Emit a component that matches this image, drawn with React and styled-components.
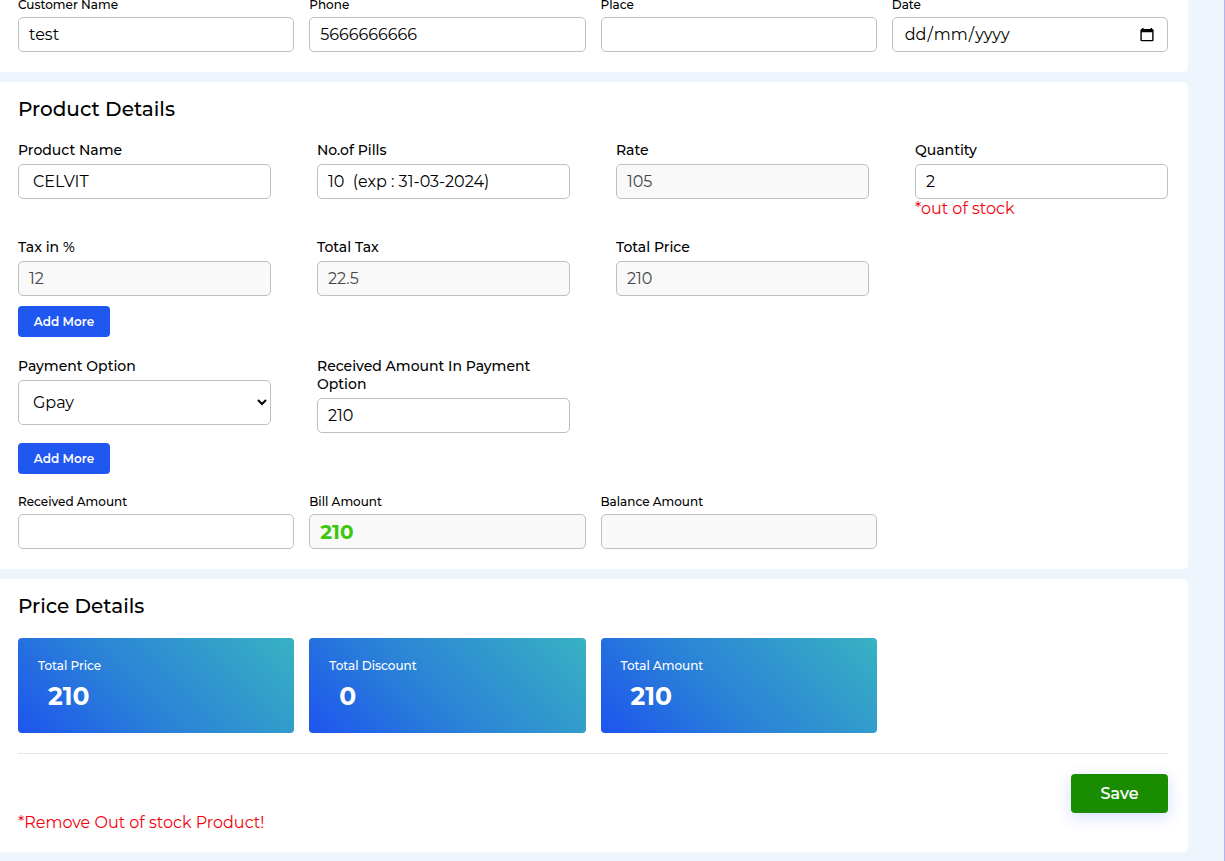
import React from "react";
import styled, { createGlobalStyle } from "styled-components";

const Global = createGlobalStyle`
  *, *::before, *::after { box-sizing: border-box; }
  html, body { margin: 0; padding: 0; }
  body {
    background: #eff5fd;
    color: #000;
    font-family: Montserrat, Inter, "Liberation Sans", sans-serif;
    height: 861px;
    overflow: hidden;
  }
  input, select, button { font-family: inherit; }
`;

const Page = styled.main`
  height: 861px;
  padding-right: 36px;
  display: flex;
  flex-direction: column;
  gap: 10px;
  border-right: 1px solid #b3b0f6;
  overflow: hidden;
`;

const Panel = styled.section`
  flex: none;
  height: ${(p) => p.$height}px;
  padding: ${(p) => p.$top || 0}px 20px 20px 18px;
  background: #fff;
  border-radius: ${(p) => (p.$first ? "0 0 5px 0" : "0 5px 5px 0")};
  display: flex;
  flex-direction: column;
  justify-content: ${(p) => (p.$first ? "flex-end" : "flex-start")};
`;

const Title = styled.h2`
  margin: 0;
  font-size: 20px;
  line-height: 24px;
  font-weight: 500;
`;

const Columns = styled.div`
  display: grid;
  grid-template-columns: repeat(4, minmax(0, 1fr));
  column-gap: ${(p) => p.$gap}px;
  row-gap: 20px;
  align-items: start;
  margin-top: ${(p) => p.$mt || 0}px;
`;

const FieldBox = styled.label`
  display: flex;
  flex-direction: column;
`;

const Label = styled.span`
  font-size: ${(p) => (p.$small ? 12 : 14)}px;
  line-height: ${(p) => (p.$small ? 15 : 18)}px;
  font-weight: 500;
  margin-bottom: 5px;
`;

const Input = styled.input`
  width: 100%;
  height: 35px;
  padding: 0 10px 0 ${(p) => p.$indent || 10}px;
  border: 1px solid #bfbfbf;
  border-radius: 5px;
  background: #fff;
  color: #000;
  font-size: 16px;
  outline: none;
  &:disabled {
    background: #f9f9f9;
    color: #484848;
  }
`;

const BillInput = styled(Input)`
  font-size: 20px;
  font-weight: 700;
  &:disabled { color: #3bc80c; }
`;

const DateBox = styled.div`
  height: 35px;
  padding: 0 13px 0 11px;
  border: 1px solid #bfbfbf;
  border-radius: 5px;
  display: flex;
  align-items: center;
  justify-content: space-between;
  font-size: 16px;
`;

const DatePart = styled.span`
  padding: 0 1px;
`;

const Select = styled.select`
  width: 100%;
  height: 45px;
  padding: 0 0 0 10px;
  border: 1px solid #bfbfbf;
  border-radius: 5px;
  background: #fff;
  color: #000;
  font-size: 16px;
`;

const ErrorText = styled.span`
  font-size: 16px;
  line-height: 19px;
  color: #f2000c;
`;

const AddButton = styled.button`
  flex: none;
  align-self: flex-start;
  width: 92px;
  height: 31px;
  margin-top: 10px;
  padding: 0;
  border: 0;
  border-radius: 4px;
  background: #1f57f0;
  color: #fff;
  font-size: 12px;
  font-weight: 600;
`;

const PriceCard = styled.div`
  height: 95px;
  padding: 20px;
  border-radius: 4px;
  background: linear-gradient(45deg, #1d54ef, #2a80d8 40%, #38b2c2);
  color: #fff;
`;

const CardLabel = styled.div`
  font-size: 12px;
  line-height: 15px;
  font-weight: 500;
`;

const CardValue = styled.div`
  margin-top: 8px;
  padding-left: 10px;
  font-size: 25px;
  line-height: 31px;
  font-weight: 700;
`;

const Rule = styled.hr`
  width: 100%;
  height: 1px;
  margin: 20px 0 0;
  border: 0;
  background: #e8e8e8;
`;

const Footer = styled.footer`
  display: flex;
  justify-content: space-between;
  align-items: flex-start;
  padding-top: 20px;
`;

const Warning = styled(ErrorText)`
  margin-top: 39px;
`;

const SaveButton = styled.button`
  width: 97px;
  height: 39px;
  padding: 0;
  border: 0;
  border-radius: 4px;
  background: #1a8c02;
  color: #fff;
  font-size: 16px;
  font-weight: 500;
  -webkit-text-stroke: 0.2px #fff;
  box-shadow: 0 4px 16px rgba(31, 87, 240, 0.2);
`;

function CalendarIcon() {
  return (
    <svg width="14" height="16" viewBox="0 0 14 16" aria-hidden="true">
      <path
        fill="#000"
        fillRule="evenodd"
        d="M2 1h1.5v1h7V1H12v1h.5A1.3 1.3 0 0 1 13.600 3.300V13a1.300 1.300 0 0 1-1.300 1.300H1.700A1.300 1.300 0 0 1 .4 13V3.300A1.300 1.300 0 0 1 1.500 2H2ZM1.800 5.200V12.900H12.200V5.200Z"
      />
    </svg>
  );
}

function Field({ label, small, children }) {
  return (
    <FieldBox>
      <Label $small={small}>{label}</Label>
      {children}
    </FieldBox>
  );
}

const cards = [
  { label: "Total Price", value: "210" },
  { label: "Total Discount", value: "0" },
  { label: "Total Amount", value: "210" },
];

export default function App() {
  return (
    <>
      <Global />
      <Page>
        <Panel $height={72} $first>
          <Columns $gap={15}>
            <Field small label="Customer Name"><Input defaultValue="test" /></Field>
            <Field small label="Phone"><Input defaultValue="5666666666" /></Field>
            <Field small label="Place"><Input /></Field>
            <Field small label="Date">
              <DateBox>
                <span>
                  <DatePart>dd</DatePart>/<DatePart>mm</DatePart>/<DatePart>yyyy</DatePart>
                </span>
                <CalendarIcon />
              </DateBox>
            </Field>
          </Columns>
        </Panel>

        <Panel $height={487} $top={15}>
          <Title>Product Details</Title>
          <Columns $gap={46} $mt={20}>
            <Field label="Product Name"><Input $indent={14} defaultValue="CELVIT" /></Field>
            <Field label="No.of Pills"><Input defaultValue={"10\u00a0 (exp : 31-03-2024)"} /></Field>
            <Field label="Rate"><Input disabled defaultValue="105" /></Field>
            <Field label="Quantity">
              <Input defaultValue="2" />
              <ErrorText>*out of stock</ErrorText>
            </Field>
            <Field label="Tax in %"><Input disabled defaultValue="12" /></Field>
            <Field label="Total Tax"><Input disabled defaultValue="22.5" /></Field>
            <Field label="Total Price"><Input disabled defaultValue="210" /></Field>
          </Columns>
          <AddButton>Add More</AddButton>
          <Columns $gap={46} $mt={20}>
            <Field label="Payment Option">
              <Select defaultValue="Gpay"><option>Gpay</option></Select>
            </Field>
            <Field label="Received Amount In Payment Option"><Input defaultValue="210" /></Field>
          </Columns>
          <AddButton>Add More</AddButton>
          <Columns $gap={15} $mt={20}>
            <Field small label="Received Amount"><Input /></Field>
            <Field small label="Bill Amount"><BillInput disabled defaultValue="210" /></Field>
            <Field small label="Balance Amount"><Input disabled /></Field>
          </Columns>
        </Panel>

        <Panel $height={273} $top={15}>
          <Title>Price Details</Title>
          <Columns $gap={15} $mt={20}>
            {cards.map((c) => (
              <PriceCard key={c.label}>
                <CardLabel>{c.label}</CardLabel>
                <CardValue>{c.value}</CardValue>
              </PriceCard>
            ))}
          </Columns>
          <Rule />
          <Footer>
            <Warning>*Remove Out of stock Product!</Warning>
            <SaveButton>Save</SaveButton>
          </Footer>
        </Panel>
      </Page>
    </>
  );
}
